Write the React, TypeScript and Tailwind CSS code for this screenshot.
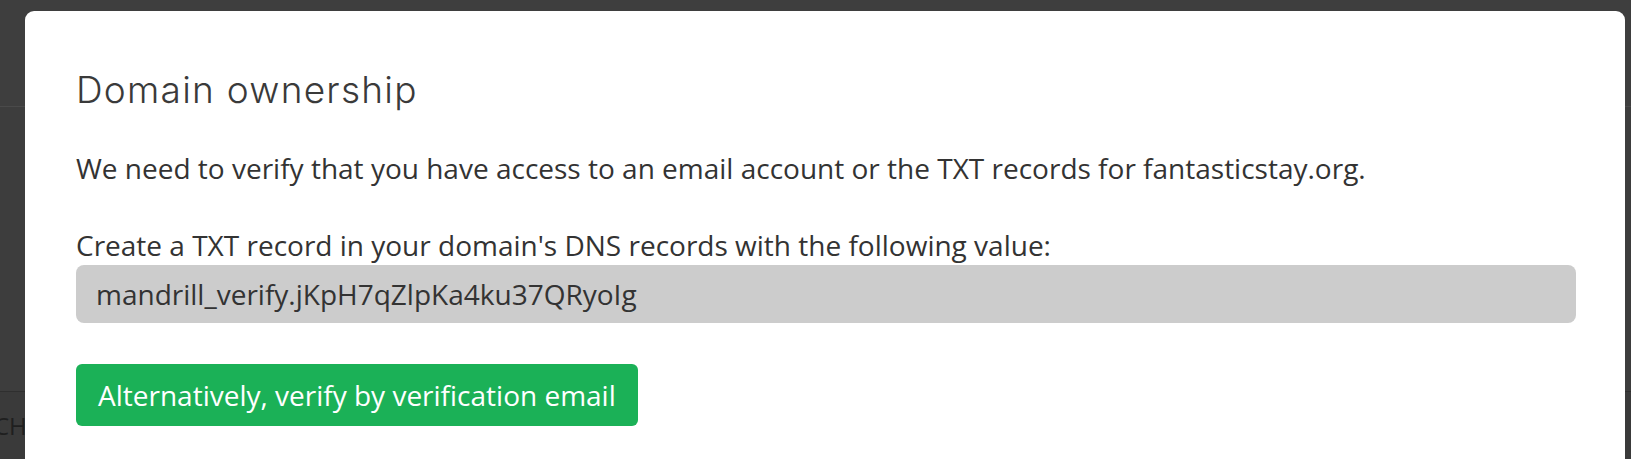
export default function App() {
  return (
    <div className="relative h-[459px] w-full overflow-hidden bg-[#3d3d3d]">
      {/* dimmed page behind the dialog */}
      <div className="h-[107px] border-b border-[#4a4a4a] bg-[#3e3e3e]" />
      <div className="mt-[284px] flex h-[68px] items-center border-t border-[#2f2f2f] bg-[#3a3a3a]">
        <span
          className="-ml-[6px] text-[24px] text-[#1f1f1f]"
          style={{ fontFamily: "'Open Sans', sans-serif" }}
        >
          CH
        </span>
      </div>

      {/* dialog */}
      <div
        className="absolute left-[25px] top-[11px] h-[480px] w-[1600px] rounded-t-[9px] bg-white pl-[51px] pt-[58px] text-[#333333]"
        style={{ fontFamily: "'Open Sans', sans-serif" }}
      >
        <h2
          className="text-[37px] font-light leading-[42px] tracking-[1.25px] text-[#3a3a3a]"
          style={{ fontFamily: "Inter, 'Open Sans', sans-serif" }}
        >
          Domain ownership
        </h2>

        <p className="mt-[40px] text-[28px] leading-[34px]">
          We need to verify that you have access to an email account or the TXT records for fantasticstay.org.
        </p>

        <p className="mt-[43px] text-[28px] leading-[34px]">
          Create a TXT record in your domain's DNS records with the following value:
        </p>
        <div className="mt-[3px] flex h-[58px] w-[1500px] items-center rounded-[8px] bg-[#cccccc] px-[20px] text-[28px] text-[#333333]">
          mandrill_verify.jKpH7qZlpKa4ku37QRyoIg
        </div>

        <button className="mt-[41px] flex h-[62px] items-center rounded-[6px] bg-[#1bb157] px-[22px] text-[28px] text-white">
          Alternatively, verify by verification email
        </button>
      </div>
    </div>
  );
}
